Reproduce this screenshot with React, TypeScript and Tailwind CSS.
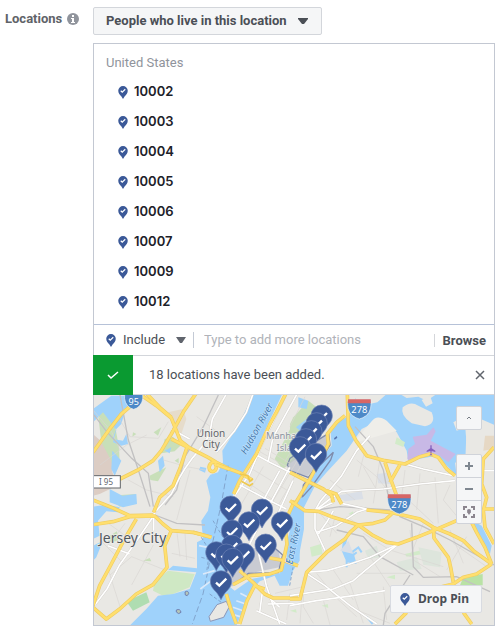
import React from "react";

const zipCodes = ["10002", "10003", "10004", "10005", "10006", "10007", "10009", "10012"];

const mapPins: [number, number][] = [
  [695, 77], [680, 100], [664, 124], [648, 148], [630, 172], [678, 192],
  [422, 350], [516, 359], [477, 397], [576, 397], [426, 422], [527, 464],
  [426, 467], [379, 487], [409, 494], [462, 492], [428, 507], [393, 574],
];

const westHighways = [
  "M0 175 L50 105 L85 60 L120 30",
  "M140 0 L190 35 L235 72 L250 110 L262 140 L290 162 L345 190 L370 205 L412 226",
  "M162 0 L200 40 L235 70",
  "M308 0 L272 52 L235 120 L205 170 L180 200 L135 228 L75 258",
  "M235 135 L285 160",
  "M365 208 C378 222 362 242 350 228 C344 214 356 202 366 204",
  "M282 160 L262 220 L240 275 L200 310 L182 355",
  "M0 318 L30 330 L60 342 L110 365 L180 363",
  "M0 392 L60 383 L110 368 L185 366 L210 390 L235 410",
  "M235 410 L300 415 L355 430",
  "M235 410 L215 455 L222 520 L180 572 L130 600 L80 645 L40 675 L0 640",
  "M130 375 L92 440 L55 510 L20 575 L0 635",
  "M578 0 L550 55 L530 92 L490 180 L440 260 L422 300",
  "M605 320 L575 385 L582 450 L565 528 L530 540 L470 545 L420 572",
  "M530 492 L575 500 L615 515",
  "M440 530 L480 565 L515 600 L540 612 L615 612",
  "M515 585 L485 575 L462 620 L440 690",
  "M400 600 L412 640 L430 690",
];

const eastHighways = [
  "M172 0 L175 95 L198 140 L230 185 L285 200 L345 210 L390 188 L420 180 L445 190 L470 225 L495 245",
  "M285 205 L300 250 L320 305 M330 212 L300 265",
  "M0 320 L45 350 L85 352 L130 370 L205 393 L250 425 L290 445 L325 450 L380 430 L430 410 L500 380",
  "M15 330 L60 255 L95 190 L115 150 L112 120 L140 85 L165 65",
  "M0 235 L45 258 L100 285 L125 305 L130 325 M110 290 L138 300 L155 330",
  "M230 348 L300 355 L390 375 L430 400 L480 420 L520 440 L550 470 L605 510",
  "M205 393 L250 388 L285 378 L305 360",
  "M205 393 L180 415 L165 435 L110 475 L50 535 L30 615 L0 615",
  "M430 400 L432 432 L475 490 L482 520 L490 565",
  "M455 578 L490 570 L520 550 L560 540 L605 510",
  "M545 385 L560 415 L585 460 L605 510",
  "M612 160 L580 195 L575 270 L590 310 L580 350 L585 400 L612 450 M580 345 H612",
  "M350 655 L315 690 M520 655 L545 690",
];

const bridges = [
  "M412 226 L440 236 L478 258",
  "M370 212 L410 226",
  "M300 415 L355 430",
];

const westStreets = [
  "M0 640 L42 585 L80 512 L110 470 L145 420 L182 365 L190 345",
  "M45 455 L110 480 M190 350 L235 300 L260 250 L275 225 L300 190 L330 155 L350 120 L358 75 L400 0",
  "M235 105 L290 135 M182 370 V410",
  "M480 0 L460 55 L425 110 L370 175",
  "M425 305 L470 240 L505 155 L580 0",
  "M485 180 L530 205 L612 245 M525 205 L540 130 L612 0",
  "M435 270 L510 310 L580 345",
  "M500 490 L495 470 L520 575 L560 690",
  "M465 460 L520 350 L590 220",
  "M550 370 L600 260 M505 330 L560 230",
  "M510 580 L500 655 M490 650 L580 690 M525 630 L612 628 M530 612 L560 640",
];

const eastStreets = [
  "M75 350 L92 320 L155 245 L200 170 L240 125",
  "M75 350 L120 315 L155 292 L215 288 L280 285",
  "M155 328 L230 345 M130 325 L75 350 L75 405 L105 470",
  "M80 415 L140 395 L200 355 L230 345",
  "M45 535 L110 530 L180 510 L240 490 L325 450",
  "M325 450 L280 485 L225 530 L190 560 L130 585 L0 605",
  "M0 635 L80 620 L190 605 L285 590",
  "M45 535 L105 575 L180 635 L260 690",
  "M345 210 L400 225 L490 245 M280 285 L390 270 L495 260",
  "M575 230 H612 M130 350 L110 385 L85 420",
];

const sideStreets = [
  "M9 60 L65 125 L90 180 M90 90 L120 140 L205 145 L235 95",
  "M30 225 L110 165 L170 135 M115 270 L170 300 L250 320",
  "M220 210 L290 230 L345 240 M320 80 L410 145 M300 240 L260 390",
  "M55 400 L110 440 L220 460 M105 400 L75 440 M55 540 L90 650",
  "M60 555 L125 500 L225 540 M125 585 L190 465 M30 450 L100 520",
  "M245 490 L315 505 M260 420 L270 500 M285 430 L290 510",
  "M455 265 L550 330 M475 230 L590 300 M500 180 L600 235",
  "M565 345 L660 180 M545 340 L635 190 M450 350 L520 230",
  "M585 215 L660 75 M525 175 L600 220 M600 110 L645 20",
  "M555 610 L640 590 L640 650 M640 560 L630 700 M600 610 L590 690",
  "M690 370 L740 430 M735 380 L720 440 M770 380 L800 400",
  "M680 550 L735 620 L800 680 M730 540 L790 630 M640 650 L670 700",
  "M700 630 L720 705 M720 270 L795 330 M820 230 L860 300",
  "M800 210 L860 260 L900 310 M825 180 L805 260 M850 340 L870 205",
  "M945 240 L935 320 M990 250 L980 360 M1035 262 L1045 400",
  "M1080 285 L1060 330 L1110 390 M950 325 L1030 400",
  "M1000 400 L960 500 M820 430 L900 480 L1060 530",
  "M840 500 L920 620 M800 550 L950 550 M780 580 L820 700",
  "M960 420 L970 510 L1050 560 M1080 420 L1120 520 M1130 440 L1070 540",
  "M1090 460 L1190 530 M880 590 L890 690 M800 660 L900 700",
];

function PinIcon({ className = "" }: { className?: string }) {
  return (
    <svg viewBox="0 0 20 26" className={`h-[13px] w-[10px] shrink-0 ${className}`} aria-hidden="true">
      <path d="M10 0a9.500 9.500 0 0 1 9.500 9.500c0 5-3.500 8.500-6 11L10 26l-3.500-5.500c-2.500-2.500-6-6-6-11A9.500 9.500 0 0 1 10 0Z" fill="#3b5998" />
      <path d="m5.500 9.500 3 3 6-6" fill="none" stroke="#fff" strokeWidth="2.400" />
    </svg>
  );
}

function InterstateShield({ x, y, label }: { x: number; y: number; label: string }) {
  return (
    <g transform={`translate(${x} ${y})`}>
      <path d="M-34-27 H34 Q39 4 22 20 Q10 29 0 31 Q-10 29-22 20 Q-39 4-34-27Z" fill="#4d89c8" stroke="#eef3f7" strokeWidth="2" />
      <path d="M-34-28 H34 V-16 H-35Z" fill="#d76665" />
      <text y="12" textAnchor="middle" fontSize="28" fill="#fff">{label}</text>
    </g>
  );
}

function Roads({ paths, casing, fill, outer, inner }: { paths: string[]; casing: string; fill: string; outer: number; inner: number }) {
  return (
    <g fill="none" strokeLinejoin="round">
      <g stroke={casing} strokeWidth={outer}>
        {paths.map((d) => <path key={d} d={d} />)}
      </g>
      <g stroke={fill} strokeWidth={inner}>
        {paths.map((d) => <path key={d} d={d} />)}
      </g>
    </g>
  );
}

function LocationMap() {
  return (
    <svg
      viewBox="12 15 1200 690"
      preserveAspectRatio="xMidYMid slice"
      className="block h-[230px] w-full font-['Noto_Sans',sans-serif]"
      role="img"
      aria-label="Map of the New York area with 18 selected locations"
    >
      <rect x="0" y="0" width="1230" height="720" fill="#e9e8e4" />

      {/* New Jersey, the Hudson and the harbor */}
      <g transform="translate(9 12)">
        <path d="M0 120 L28 145 L60 190 L58 235 L65 250 L0 250Z M0 280 H62 L20 300 L0 305Z" fill="#dccdc4" />
        <path d="M225 55 L270 45 L280 75 L265 120 L238 95Z" fill="#e6dccb" />
        <g fill="#c8dfb9">
          <path d="M15 60 L60 10 L85 30 L90 70 L65 90 L78 160 L80 205 L65 245 L55 200 L25 145Z" />
          <path d="M215 135 L240 128 L262 155 L245 172 L205 178Z" />
          <path d="M170 245 L220 220 L195 262 L172 258Z" />
          <path d="M50 305 L128 300 L125 330 L80 338Z M50 425 L72 412 L75 440 L45 445Z" />
          <path d="M185 562 L225 530 L305 540 L290 580 L240 600 L210 605 L180 590Z" fill="#cfe8c4" />
          <path d="M100 622 L160 595 L170 625 L120 650Z" fill="#afddb1" />
          <path d="M182 115 L205 100 L195 125Z M150 500 l20-8 5 10z M120 115 l10 5-12 8z M245 200 l12-8v16z" />
          <path d="M545 195 L612 65 L615 190 L570 225Z" />
        </g>
        <g fill="#9fd2fb">
          <path d="M482 0 H568 L525 90 L485 180 L435 260 L418 310 L400 400 L392 500 L400 570 L425 590 L475 555 L560 538 L580 500 L585 430 L600 380 L620 340 V500 L600 530 L585 575 L560 575 L545 545 L500 562 L480 585 L455 635 L430 695 H110 L160 645 L195 605 L240 600 L290 585 L310 535 L225 528 L240 515 L312 523 L312 445 L330 435 L325 380 L345 350 L352 310 L340 260 L352 242 L375 235 L390 205 L388 170 L435 95Z" />
          <path d="M0 45 L55 5 H115 L125 35 L95 55 L85 90 L70 105 L58 135 L90 140 L100 120 L105 150 L85 155 L60 145 L70 108 L30 55 L0 85Z" />
          <path d="M58 170 L85 200 L65 245 L55 225Z M50 285 L88 305 L130 300 L132 330 L90 340 L50 325Z" />
          <path d="M0 338 L40 332 L80 340 L75 355 L40 352 L15 380 L20 425 L0 435Z M0 455 L30 440 L10 490 L0 500Z" />
          <path d="M195 200 L210 185 L215 215 L200 235Z M322 218 l18 4-4 14-18-8z M215 170 l20-10-5 18z" />
        </g>
        <path d="M348 668 L372 632 L400 622 L408 640 L392 670 L352 682Z" fill="#e9e8e4" stroke="#8c97b7" strokeWidth="3" />
        <path d="M276 594 q10-6 11 5 -4 10-10 4z M250 648 q12-5 14 7 -7 8-14-1z" fill="#b5c6b8" stroke="#7181b2" strokeWidth="3" />
        <g fill="none" stroke="#82a5ce" strokeWidth="3">
          <path strokeDasharray="18 9" d="M405 215 L385 330 L360 440 L345 530 L330 600 L298 690" />
          <path d="M325 430 L350 470 L340 540 M360 380 L390 430 M325 490 L360 500 M590 575 L600 520 M350 600 L385 625" strokeDasharray="10 6" />
        </g>
        <path d="M322 585 L355 560 M330 540 L365 530 M430 620 l28 10 M420 640 l30 10 M415 660 l26 8 M442 598 l20 10 M318 455 l30 6" fill="none" stroke="#dceafa" strokeWidth="5" />
      </g>

      {/* Queens, the upper East River and the airport */}
      <g transform="translate(600 12)">
        <path d="M10 70 L55 20 L80 40 L20 170 L0 180 V90Z" fill="#c8dfb9" />
        <g fill="#9fd2fb">
          <path d="M205 0 H612 V92 L560 70 L530 95 L525 225 L495 205 L500 245 L440 185 L355 200 L350 170 L320 115 L290 82 L250 88 L215 105 L170 170 L110 235 L75 275 L42 340 L42 405 L28 480 L10 510 L0 500 V340 L30 300 L62 240 L100 185 L125 155 L122 115 L150 80 L178 65 L185 30Z" />
          <path d="M548 380 L575 395 L605 455 L600 480 L570 440Z" />
          <path d="M160 432 L175 425 L165 460 L190 475 L200 510 L170 505 L155 470Z" />
          <path d="M25 10 L55 20 L50 45 L25 40Z M18 100 L50 75 L35 115Z" />
        </g>
        <path d="M170 520 V500 L200 475 M230 668 L248 690 M165 490 L205 460 L215 475" fill="none" stroke="#9fd2fb" strokeWidth="6" />
        <g fill="#e9e8e4">
          <path d="M338 40 Q362 20 385 35 L425 55 Q440 90 405 97 L365 88 Q330 65 338 40Z" />
          <path d="M185 0 H290 L262 25 L215 35Z M330 0 H440 L410 20 L385 8 L350 12Z" />
          <path d="M395 18 L420 5 L428 28 L408 38Z M490 85 L520 68 L545 95 L500 110Z M525 90 L612 95 V170 L535 215Z" />
          <path d="M245 82 Q260 60 290 80 L320 110 L215 140 L190 145Z" fill="#efeee9" />
        </g>
        <path d="M355 165 L375 150 L368 128 L410 122 L430 100 L437 112 L422 140 L497 180 L475 205 L445 182 L415 178 L365 205 L352 195Z" fill="#c8b9e6" />
        <path d="M585 125 H612 V165 L580 170Z" fill="#e6d8c4" />
        <g fill="#d2ebc9">
          <path d="M520 550 L578 540 V574 H510Z" fill="#b9e2a5" />
          <path d="M60 460 L92 450 L98 480 L65 488Z M345 480 L410 465 L412 478 L350 488Z" />
          <path d="M320 130 l25 15-5 14-25-10z M175 360 l14-8 4 14z M290 550 l25-8v14z M95 635 l18-5 2 12z M0 650 l18-4 2 10z" />
        </g>
        <path d="M320 505 L380 490 L395 525 L330 530Z M385 460 L455 475 L450 520 L400 512Z M225 470 L260 455 L270 490 L235 495Z" fill="#dde5dc" />
        <path d="M140 305 L215 292 L220 315 L165 322Z M260 240 L305 235 L300 270 L265 268Z M150 470 L175 440 L190 480Z" fill="#dadfe7" />
      </g>

      <path d="M592 225 L615 195 L650 180 L712 130 L718 165 L675 235 L652 258 L600 242Z M430 470 L565 480 L575 530 L480 550 L425 590 L400 520Z" fill="#b8bcc7" opacity=".65" />
      <path d="M592 225 L600 205 L615 195 L700 140 L716 130 L720 165 L675 235 L655 262 L600 242Z M637 320 L640 285 L690 225 L730 187 L722 210 L665 290 L640 318Z M430 585 L475 550 L565 548 L578 495 L550 470" fill="none" stroke="#7f8bab" strokeWidth="4" />
      <path d="M732 145 l8-7 2 5-8 6z" fill="#5876b0" />

      <g fill="none" stroke="#d9d7d3" strokeWidth="2">
        {sideStreets.map((d) => <path key={d} d={d} />)}
      </g>
      <g fill="none" stroke="#c2c1c2" strokeWidth="4">
        <path d="M12 75 L50 125 L125 205 L175 250 L190 350" />
        <path d="M90 15 L115 150 L145 240 L180 350" />
        <path d="M385 15 L340 110 L285 200 L260 300 L225 345" />
        <path d="M195 375 L260 400 L345 405" />
        <path d="M795 110 L850 170 L880 240 L895 320 L930 380 L1000 410 L1080 450 L1212 525" />
        <path d="M680 360 L750 350 L900 360 M965 400 L970 530 L1000 562 L1100 560 L1200 605" />
        <path d="M740 420 L820 440 L870 500 L970 555 M960 555 L885 670 L880 705" />
      </g>

      <g transform="translate(9 12)">
        <Roads paths={westStreets} casing="#d0cdc8" fill="#ffffff" outer={7} inner={5} />
        <Roads paths={westHighways} casing="#efcd63" fill="#ffdf6e" outer={11} inner={7} />
        <Roads paths={bridges} casing="#efcd63" fill="#ffdf6e" outer={11} inner={7} />
        <path d="M440 240 L465 245 L470 262 L480 255 M445 262 L470 275 L480 268" fill="none" stroke="#efc94f" strokeWidth="5" />
      </g>
      <g transform="translate(600 12)">
        <Roads paths={eastStreets} casing="#d0cdc8" fill="#ffffff" outer={7} inner={5} />
        <Roads paths={eastHighways} casing="#efcd63" fill="#ffdf6e" outer={11} inner={7} />
      </g>

      <g fill="#606368" stroke="#f0efec" strokeWidth="4" paintOrder="stroke" textAnchor="middle">
        <text fontSize="30">
          <tspan x="363" y="141">Union</tspan>
          <tspan x="363" y="175">City</tspan>
        </text>
        <text x="128" y="458" fontSize="42" fill="#52575e">Jersey City</text>
        <text fontSize="28" fill="#8b939f">
          <tspan x="600" y="146">Manhattan</tspan>
          <tspan x="600" y="184">Island</tspan>
        </text>
      </g>
      <g fill="#4378ae" fontSize="29" fontStyle="italic" stroke="#c8e5fb" strokeWidth="3" paintOrder="stroke">
        <text transform="translate(468 195) rotate(-61)">Hudson River</text>
        <text transform="translate(607 524) rotate(-78)">East River</text>
      </g>
      <path d="M1021 166 h4 v9 l11 7 v4 l-11-3 -1 9 4 4 h-10 l4-4 -1-9 -11 3 v-4 l11-7z" fill="#8461bd" />
      <g transform="translate(131 32)">
        <path d="M-27-20 H27 Q31 8 10 22 L0 26 L-10 22 Q-31 8-27-20Z" fill="#4d89c8" stroke="#eef3f7" strokeWidth="2" />
        <text y="12" textAnchor="middle" fontSize="27" fill="#fff">95</text>
      </g>
      <InterstateShield x={808} y={56} label="278" />
      <InterstateShield x={928} y={341} label="278" />
      <rect x="0" y="257" width="91" height="37" fill="#fff" stroke="#63666a" strokeWidth="3" />
      <text x="48" y="285" textAnchor="middle" fontSize="24" fill="#62666c">I 95</text>

      {mapPins.map(([x, y]) => (
        <g key={`${x}-${y}`} transform={`translate(${x} ${y})`}>
          <path d="M0-32 A32 32 0 0 1 32 0 C32 18 18 27 10 38 Q5 45 0 55 Q-5 45-10 38 C-18 27-32 18-32 0 A32 32 0 0 1 0-32Z" fill="#3b5998" stroke="#6e84b5" strokeWidth="2" />
          <path d="M-15 4 L-5 13 L16-8" fill="none" stroke="#fff" strokeWidth="7" />
        </g>
      ))}
    </svg>
  );
}

const mapButton = "flex w-[26px] items-center justify-center border border-[#d0d3d9] bg-[#f5f6f7] text-[#7f8790]";

export default function App() {
  return (
    <main className="flex items-start bg-white pt-[7px] pr-2 pb-1 pl-[5px] font-[Roboto,sans-serif] text-[13px] text-[#4b4f56]">
      <div className="flex h-6 w-[88px] shrink-0 items-center gap-[5px] font-bold text-[#606368]">
        <label htmlFor="audience">Locations</label>
        <button type="button" aria-label="About locations">
          <svg viewBox="0 0 12 12" className="block size-3">
            <circle cx="6" cy="6" r="6" fill="#90949c" />
            <path d="M5 2h2v2H5zM4 5h3v4h1v1H4V9h1V6H4z" fill="#fff" />
          </svg>
        </button>
      </div>

      <div className="min-w-0 flex-1">
        <div className="relative w-fit">
          <select id="audience" className="block h-7 w-[229px] appearance-none rounded-xs border border-[#d3d6db] bg-[#f5f6f7] pl-3 font-bold text-[#4b4f56]">
            <option>People who live in this location</option>
          </select>
          <svg viewBox="0 0 10 6" className="pointer-events-none absolute top-[11px] right-[14px] h-[6px] w-[10px]" aria-hidden="true">
            <path d="M0 0h10v1L6 6H4L0 1z" fill="#4b4f56" />
          </svg>
        </div>

        <section className="mt-2 border border-[#c3c8d2]">
          <div className="h-[280px] overflow-y-auto pt-[9px] pl-3">
            <h2 className="h-6 leading-5 text-[#90949c]">United States</h2>
            <ul className="font-[Inter,sans-serif] font-semibold text-[#1d2129]">
              {zipCodes.map((code) => (
                <li key={code} className="flex h-[30px] items-center gap-[6px] pl-3">
                  <PinIcon />
                  {code}
                </li>
              ))}
            </ul>
          </div>

          <div className="flex h-[31px] items-center border-t border-[#b6c2d8]">
            <div className="relative flex h-full items-center pl-3">
              <PinIcon className="mt-px" />
              <select aria-label="Include or exclude" className="w-[77px] appearance-none pl-[7px] text-[#4b4f56]">
                <option>Include</option>
              </select>
              <svg viewBox="0 0 10 6" className="pointer-events-none absolute top-3 right-2 h-[6px] w-[10px]" aria-hidden="true">
                <path d="M0 0h10L6 6H4z" fill="#60656d" />
              </svg>
              <span className="h-4 w-px bg-[#c4cad5]" />
            </div>
            <input aria-label="Add locations" placeholder="Type to add more locations" className="min-w-0 flex-1 px-[10px] outline-none placeholder:text-[#b0b3b9]" />
            <button type="button" className="border-l border-[#d4d6da] px-2 leading-[13px] font-bold">Browse</button>
          </div>

          <div role="status" className="flex h-10 items-center border-y border-[#d3d6db]">
            <span className="-my-px -ml-px flex h-10 w-10 items-center justify-center bg-[#0a9a31]">
              <svg viewBox="0 0 12 9" className="h-[9px] w-3" aria-hidden="true">
                <path d="m1 4 3 3 7-6" fill="none" stroke="#fff" strokeWidth="1.500" />
              </svg>
            </span>
            <p className="flex-1 pl-4">18 locations have been added.</p>
            <button type="button" aria-label="Dismiss" className="pr-[9px]">
              <svg viewBox="0 0 10 10" className="block size-[10px]">
                <path d="m1 1 8 8M9 1 1 9" stroke="#60656d" strokeWidth="1.500" />
              </svg>
            </button>
          </div>

          <div className="relative">
            <LocationMap />
            <div className="absolute top-[11px] right-3 flex flex-col">
              <button type="button" aria-label="Collapse map" className={`${mapButton} mb-6 h-6 rounded-xs`}>
                <svg viewBox="0 0 6 4" className="h-1 w-[6px]"><path d="m1 3 2-2 2 2" fill="none" stroke="#777d85" /></svg>
              </button>
              <button type="button" aria-label="Zoom in" className={`${mapButton} h-6 rounded-t-xs`}>
                <svg viewBox="0 0 10 10" className="size-2"><path d="M5 0v10M0 5h10" stroke="#7f8790" strokeWidth="2.500" /></svg>
              </button>
              <button type="button" aria-label="Zoom out" className={`${mapButton} -mt-px h-6`}>
                <svg viewBox="0 0 10 10" className="size-2"><path d="M0 5h10" stroke="#7f8790" strokeWidth="2.500" /></svg>
              </button>
              <button type="button" aria-label="Fit locations" className={`${mapButton} -mt-px h-6 rounded-b-xs`}>
                <svg viewBox="0 0 12 12" className="size-3" fill="none" stroke="#8b858e" strokeWidth="2"><path d="M1 4V1h3M8 1h3v3M11 8v3H8M4 11H1V8" /><circle cx="6" cy="5" r="2" fill="#8b858e" stroke="none" /><path d="M4 6h4L6 9z" fill="#8b858e" stroke="none" /></svg>
              </button>
            </div>
            <button type="button" className="absolute right-3 bottom-3 flex h-7 items-center gap-2 rounded-xs border border-[#d8dbe1] bg-[#f5f6f7] pr-3 pl-[9px] font-['Noto_Sans',sans-serif] text-[12px] font-bold">
              <PinIcon />
              Drop Pin
            </button>
          </div>
        </section>
      </div>
    </main>
  );
}
